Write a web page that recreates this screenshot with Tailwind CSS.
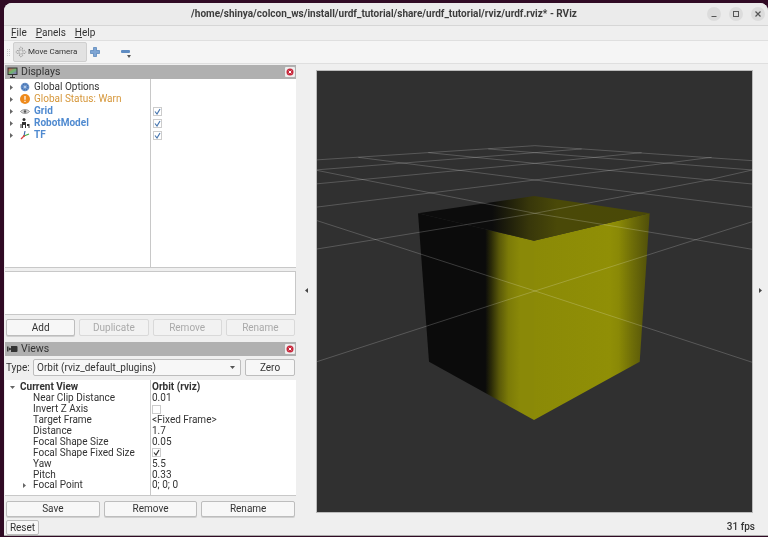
<!DOCTYPE html>
<html>
  <head>
    <meta charset="utf-8" />
    <title>RViz</title>
    <script src="https://cdn.jsdelivr.net/npm/@tailwindcss/browser@4"></script>
  </head>
  <body>
    <div class="h-[537px] w-[768px] overflow-hidden bg-[#300a24] pl-[4px] pt-[3px] text-[10px] leading-[10px] text-[#333] font-['Roboto',sans-serif] blur-[0.35px]">
      <div class="relative flex h-[533px] flex-col overflow-hidden rounded-t-[8px] bg-[#efefef]">
        <!-- title bar -->
        <div class="relative flex h-[23px] shrink-0 items-center justify-center border-b border-[#d6d6d6] bg-[#ebebeb] font-bold text-[#3d3d3d]">
          <span class="mr-[4px]">/home/shinya/colcon_ws/install/urdf_tutorial/share/urdf_tutorial/rviz/urdf.rviz* - RViz</span>
          <div class="absolute right-[3px] top-[4px] flex gap-[8px]">
            <div class="flex size-[14px] items-center justify-center rounded-full bg-[#dcdcdc]">
              <svg width="8" height="8" viewBox="0 0 8 8"><path d="M1.500 6.500h5" stroke="#555" stroke-width="1"/></svg>
            </div>
            <div class="flex size-[14px] items-center justify-center rounded-full bg-[#dcdcdc]">
              <svg width="8" height="8" viewBox="0 0 8 8"><rect x="1.500" y="1.500" width="5" height="5" fill="none" stroke="#555" stroke-width="1"/></svg>
            </div>
            <div class="flex size-[14px] items-center justify-center rounded-full bg-[#dcdcdc]">
              <svg width="8" height="8" viewBox="0 0 8 8"><path d="M1.500 1.500l5 5M6.500 1.500l-5 5" stroke="#555" stroke-width="1.200"/></svg>
            </div>
          </div>
        </div>
        <!-- menu -->
        <div class="flex h-[14px] shrink-0 items-center gap-[9px] pl-[7px] text-[10px]">
          <span><u>F</u>ile</span>
          <span><u>P</u>anels</span>
          <span><u>H</u>elp</span>
        </div>
        <!-- toolbar -->
        <div class="flex h-[24px] shrink-0 items-center border-y border-[#dfdfdf] bg-[#f5f5f5] pl-[3px]">
          <div class="grid grid-cols-2 gap-[1px]">
            <i class="size-[1px] bg-[#ccc]"></i><i class="size-[1px] bg-[#ccc]"></i>
            <i class="size-[1px] bg-[#ccc]"></i><i class="size-[1px] bg-[#ccc]"></i>
            <i class="size-[1px] bg-[#ccc]"></i><i class="size-[1px] bg-[#ccc]"></i>
            <i class="size-[1px] bg-[#ccc]"></i><i class="size-[1px] bg-[#ccc]"></i>
          </div>
          <div class="ml-[3px] flex h-[20px] w-[74px] items-center gap-[1px] rounded-[2px] border border-[#cfcfcf] bg-[#e2e2e2] pl-[1px] text-[8px]">
            <svg width="12" height="12" viewBox="0 0 12 12" fill="none" stroke="#888" stroke-width="0.8">
              <path d="M6 .8l2 2H7v2.200h2.200V4l2 2-2 2V7H7v2.200h1l-2 2-2-2h1V7H2.800v1l-2-2 2-2v1H5V2.800H4z" stroke-dasharray="1 .5"/>
            </svg>
            <span>Move Camera</span>
          </div>
          <svg class="ml-[3px]" width="10" height="10" viewBox="0 0 10 10"><path d="M3.500 .5h3v3h3v3h-3v3h-3v-3h-3v-3h3z" fill="#7fa5d3" stroke="#4f7fb8" stroke-width="0.7"/></svg>
          <div class="relative ml-[21px] h-[10px] w-[10px]">
            <div class="mt-[3px] h-[3px] w-[9px] rounded-[1px] bg-[#5f8cc2]"></div>
            <svg class="absolute left-[6px] top-[8px]" width="5" height="3" viewBox="0 0 5 3"><path d="M0 0h4L2 3z" fill="#555"/></svg>
          </div>
        </div>
        <!-- main area -->
        <div class="flex h-[454px] shrink-0">
          <div class="ml-[1px] flex w-[291px] shrink-0 flex-col pt-[1px]">
            <div class="flex h-[14px] shrink-0 items-center bg-[#b0b0b0] pl-[2px] text-[10.5px]">
              <svg width="11" height="11" viewBox="0 0 11 11">
                <defs>
                  <linearGradient id="screen" x1="0" y1="0" x2="1" y2="1">
                    <stop offset="0" stop-color="#d85a5a"/>
                    <stop offset="0.5" stop-color="#6cb86c"/>
                    <stop offset="1" stop-color="#8a6fc8"/>
                  </linearGradient>
                </defs>
                <rect x="0.500" y="0.500" width="10" height="7.500" fill="#333"/>
                <rect x="1.500" y="1.500" width="8" height="5.500" fill="url(#screen)"/>
                <path d="M3 10h5v1H3zM5 8h1v2H5z" fill="#333"/>
              </svg>
              <span class="ml-[3px]">Displays</span>
              <div class="ml-auto mr-[1px] flex size-[10px] items-center justify-center rounded-[1px] bg-[#eee]">
                <svg width="8" height="8" viewBox="0 0 8 8"><circle cx="4" cy="4" r="3.500" fill="#c8283c"/><path d="M2.700 2.700l2.600 2.600M5.300 2.700L2.700 5.300" stroke="#fff" stroke-width="1"/></svg>
              </div>
            </div>
            <!-- displays tree -->
            <div class="flex h-[189px] shrink-0 flex-col border-b border-[#c8c8c8] bg-white bg-[linear-gradient(#c8c8c8,#c8c8c8)] bg-[length:1px_100%] bg-[position:145px_0] bg-no-repeat pt-[2px]">
              <div class="flex h-[12px] items-center">
                <svg class="ml-[5px]" width="3" height="5" viewBox="0 0 3 5"><path d="M0 0l3 2.500L0 5z" fill="#666"/></svg>
                <svg class="ml-[7px]" width="10" height="10" viewBox="0 0 11 11"><circle cx="5.500" cy="5.500" r="4.800" fill="#6e96cc"/><circle cx="5.500" cy="5.500" r="3.200" fill="none" stroke="#3f6dad" stroke-width="1.200" stroke-dasharray="1.500 1"/><circle cx="5.500" cy="5.500" r="1.200" fill="#c4d6ee"/></svg>
                <span class="ml-[4px]">Global Options</span>
              </div>
              <div class="flex h-[12px] items-center">
                <svg class="ml-[5px]" width="3" height="5" viewBox="0 0 3 5"><path d="M0 0l3 2.500L0 5z" fill="#666"/></svg>
                <svg class="ml-[7px]" width="10" height="10" viewBox="0 0 10 10"><circle cx="5" cy="5" r="5" fill="#ee8a1c"/><path d="M4.400 2h1.200v3.800H4.400zM4.400 6.800h1.200V8H4.400z" fill="#fff"/></svg>
                <span class="ml-[4px] text-[#d6973a]">Global Status: Warn</span>
              </div>
              <div class="flex h-[12px] items-center">
                <svg class="ml-[5px]" width="3" height="5" viewBox="0 0 3 5"><path d="M0 0l3 2.500L0 5z" fill="#666"/></svg>
                <svg class="ml-[7px]" width="10" height="7" viewBox="0 0 10 7"><path d="M.5 3.500C2.500 1 7.500 1 9.500 3.500 7.500 6 2.500 6 .5 3.500z" fill="#ddd" stroke="#777" stroke-width="0.800"/><circle cx="5" cy="3.500" r="1.300" fill="#555"/></svg>
                <span class="ml-[4px] font-bold text-[#4f8ad0]">Grid</span>
                <span class="ml-auto mr-[134px] flex size-[9px] items-center justify-center border border-[#ccc] bg-white">
                  <svg width="7" height="7" viewBox="0 0 7 7"><path d="M1 3.500l2 2.500L6 1" fill="none" stroke="#4a78b0" stroke-width="1.200"/></svg>
                </span>
              </div>
              <div class="flex h-[12px] items-center">
                <svg class="ml-[5px]" width="3" height="5" viewBox="0 0 3 5"><path d="M0 0l3 2.500L0 5z" fill="#666"/></svg>
                <svg class="ml-[7px]" width="10" height="10" viewBox="0 0 10 10"><circle cx="4" cy="1.500" r="1.500" fill="#333"/><path d="M2 4h4v6H5V7H3v3H2zM.5 6h1v4h-1zM7 6h2.500v4H8.500V8H7z" fill="#333"/></svg>
                <span class="ml-[4px] font-bold text-[#4f8ad0]">RobotModel</span>
                <span class="ml-auto mr-[134px] flex size-[9px] items-center justify-center border border-[#ccc] bg-white">
                  <svg width="7" height="7" viewBox="0 0 7 7"><path d="M1 3.500l2 2.500L6 1" fill="none" stroke="#4a78b0" stroke-width="1.200"/></svg>
                </span>
              </div>
              <div class="flex h-[12px] items-center">
                <svg class="ml-[5px]" width="3" height="5" viewBox="0 0 3 5"><path d="M0 0l3 2.500L0 5z" fill="#666"/></svg>
                <svg class="ml-[7px]" width="10" height="10" viewBox="0 0 10 10"><path d="M4 6L1 9" stroke="#d84040" stroke-width="1.200"/><path d="M4 6L5 1" stroke="#3f6dad" stroke-width="1.200"/><path d="M4 6L9 4" stroke="#45b045" stroke-width="1.200"/><circle cx="4" cy="6" r="0.900" fill="#d84040"/></svg>
                <span class="ml-[4px] font-bold text-[#4f8ad0]">TF</span>
                <span class="ml-auto mr-[134px] flex size-[9px] items-center justify-center border border-[#ccc] bg-white">
                  <svg width="7" height="7" viewBox="0 0 7 7"><path d="M1 3.500l2 2.500L6 1" fill="none" stroke="#4a78b0" stroke-width="1.200"/></svg>
                </span>
              </div>
            </div>
            <!-- description -->
            <div class="mt-[3px] h-[44px] shrink-0 border border-[#c8c8c8] border-l-0 bg-white"></div>
            <div class="ml-[1px] mr-[1px] mt-[4px] grid h-[17px] shrink-0 grid-cols-4 gap-[4px]">
              <div class="flex items-center justify-center rounded-[2px] border border-[#bdbdbd] bg-[#f7f7f7] shadow-[0_1px_0_#d0d0d0]">Add</div>
              <div class="flex items-center justify-center rounded-[2px] border border-[#d9d9d9] bg-[#f2f2f2] text-[#aaa]">Duplicate</div>
              <div class="flex items-center justify-center rounded-[2px] border border-[#d9d9d9] bg-[#f2f2f2] text-[#aaa]">Remove</div>
              <div class="flex items-center justify-center rounded-[2px] border border-[#d9d9d9] bg-[#f2f2f2] text-[#aaa]">Rename</div>
            </div>
            <!-- views -->
            <div class="mt-[6px] flex h-[14px] shrink-0 items-center bg-[#b0b0b0] pl-[2px] text-[10.5px]">
              <svg width="11" height="8" viewBox="0 0 11 8"><path d="M0 1.500h1.500v5H0zM2 2.500l2 1v1l-2 1zM4 1h5.500a1 1 0 0 1 1 1v4a1 1 0 0 1-1 1H4z" fill="#333"/></svg>
              <span class="ml-[3px]">Views</span>
              <div class="ml-auto mr-[1px] flex size-[10px] items-center justify-center rounded-[1px] bg-[#eee]">
                <svg width="8" height="8" viewBox="0 0 8 8"><circle cx="4" cy="4" r="3.500" fill="#c8283c"/><path d="M2.700 2.700l2.600 2.600M5.300 2.700L2.700 5.300" stroke="#fff" stroke-width="1"/></svg>
              </div>
            </div>
            <div class="ml-[1px] mr-[1px] mt-[3px] flex h-[17px] shrink-0 items-center">
              <span class="w-[27px]">Type:</span>
              <div class="flex h-full w-[208px] items-center rounded-[2px] border border-[#bdbdbd] bg-[#f7f7f7] pl-[3px]">
                Orbit (rviz_default_plugins)
                <svg class="ml-auto mr-[5px]" width="5" height="3" viewBox="0 0 5 3"><path d="M0 0h5L2.500 3z" fill="#555"/></svg>
              </div>
              <div class="ml-[4px] flex h-full flex-1 items-center justify-center rounded-[2px] border border-[#bdbdbd] bg-[#f7f7f7]">Zero</div>
            </div>
            <!-- views tree -->
            <div class="mt-[4px] flex h-[116px] shrink-0 flex-col border-b border-[#c8c8c8] bg-white bg-[linear-gradient(#c8c8c8,#c8c8c8)] bg-[length:1px_100%] bg-[position:145px_0] bg-no-repeat pt-[2px]">
              <div class="flex h-[10.9px] items-center font-bold">
                <svg class="ml-[5px]" width="5" height="3" viewBox="0 0 5 3"><path d="M0 0h5L2.500 3z" fill="#666"/></svg>
                <span class="ml-[5px] w-[132px]">Current View</span>
                <span>Orbit (rviz)</span>
              </div>
              <div class="flex h-[10.9px] items-center"><span class="ml-[28px] w-[119px]">Near Clip Distance</span><span>0.01</span></div>
              <div class="flex h-[10.9px] items-center">
                <span class="ml-[28px] w-[119px]">Invert Z Axis</span>
                <span class="size-[9px] border border-[#ccc] bg-white"></span>
              </div>
              <div class="flex h-[10.9px] items-center"><span class="ml-[28px] w-[119px]">Target Frame</span><span>&lt;Fixed Frame&gt;</span></div>
              <div class="flex h-[10.9px] items-center"><span class="ml-[28px] w-[119px]">Distance</span><span>1.7</span></div>
              <div class="flex h-[10.9px] items-center"><span class="ml-[28px] w-[119px]">Focal Shape Size</span><span>0.05</span></div>
              <div class="flex h-[10.9px] items-center">
                <span class="ml-[28px] w-[119px]">Focal Shape Fixed Size</span>
                <span class="flex size-[9px] items-center justify-center border border-[#ccc] bg-white">
                  <svg width="7" height="7" viewBox="0 0 7 7"><path d="M1 3.500l2 2.500L6 1" fill="none" stroke="#333" stroke-width="1.200"/></svg>
                </span>
              </div>
              <div class="flex h-[10.9px] items-center"><span class="ml-[28px] w-[119px]">Yaw</span><span>5.5</span></div>
              <div class="flex h-[10.9px] items-center"><span class="ml-[28px] w-[119px]">Pitch</span><span>0.33</span></div>
              <div class="flex h-[10.9px] items-center">
                <svg class="ml-[18px]" width="3" height="5" viewBox="0 0 3 5"><path d="M0 0l3 2.500L0 5z" fill="#666"/></svg>
                <span class="ml-[7px] w-[119px]">Focal Point</span><span>0; 0; 0</span>
              </div>
            </div>
            <div class="ml-[1px] mr-[1px] mt-[5px] grid h-[16px] shrink-0 grid-cols-3 gap-[4px]">
              <div class="flex items-center justify-center rounded-[2px] border border-[#bdbdbd] bg-[#f7f7f7] shadow-[0_1px_0_#d0d0d0]">Save</div>
              <div class="flex items-center justify-center rounded-[2px] border border-[#bdbdbd] bg-[#f7f7f7] shadow-[0_1px_0_#d0d0d0]">Remove</div>
              <div class="flex items-center justify-center rounded-[2px] border border-[#bdbdbd] bg-[#f7f7f7] shadow-[0_1px_0_#d0d0d0]">Rename</div>
            </div>
          </div>
          <!-- collapse arrow left -->
          <div class="flex w-[20px] shrink-0 items-center justify-center pb-[2px]">
            <svg width="3" height="5" viewBox="0 0 3 5"><path d="M3 0L0 2.500 3 5z" fill="#444"/></svg>
          </div>
          <!-- 3d view -->
          <div class="mt-[6px] h-[443px] w-[437px] shrink-0 border border-[#bbb] bg-[#303030]">
            <svg width="435" height="441" viewBox="318 71 435 441">
              <defs>
                <linearGradient id="leftFace" gradientUnits="userSpaceOnUse" x1="419" y1="0" x2="535" y2="0">
                  <stop offset="0" stop-color="#0b0b0b"/>
                  <stop offset="0.58" stop-color="#0b0b0b"/>
                  <stop offset="0.63" stop-color="#2a2a08"/>
                  <stop offset="0.70" stop-color="#5a5909"/>
                  <stop offset="0.78" stop-color="#7c7b08"/>
                  <stop offset="0.88" stop-color="#8a8908"/>
                  <stop offset="1" stop-color="#8a8908"/>
                </linearGradient>
                <linearGradient id="rightFace" gradientUnits="userSpaceOnUse" x1="535" y1="0" x2="651" y2="0">
                  <stop offset="0" stop-color="#8b8a07"/>
                  <stop offset="0.65" stop-color="#908f06"/>
                  <stop offset="0.73" stop-color="#8a8906"/>
                  <stop offset="0.85" stop-color="#6e6d08"/>
                  <stop offset="1" stop-color="#4f4e0a"/>
                </linearGradient>
                <linearGradient id="topFace" gradientUnits="userSpaceOnUse" x1="419" y1="0" x2="651" y2="0">
                  <stop offset="0" stop-color="#0c0c0c"/>
                  <stop offset="0.32" stop-color="#0c0c0c"/>
                  <stop offset="0.48" stop-color="#38370a"/>
                  <stop offset="0.60" stop-color="#4a4908"/>
                  <stop offset="1" stop-color="#4a4907"/>
                </linearGradient>
              </defs>
              <polygon points="419,213.300 535,240.700 535,420 430,361.700" fill="url(#leftFace)"/>
              <polygon points="535,240.700 650.700,213.300 640.700,361.700 535,420" fill="url(#rightFace)"/>
              <polygon points="535,196 650.700,213.300 535,240.700 419,213.300" fill="url(#topFace)"/>
              <g transform="translate(316 120) scale(0.3333)" fill="none" stroke="#fff" stroke-opacity="0.2" stroke-width="3">
                <path d="M0 120L660 77L1312 122"/>
                <path d="M0 150L660 98L800 87"/>
                <path d="M0 192L660 130L980 98"/>
                <path d="M0 262L660 180L1190 112"/>
                <path d="M0 388L185 358L660 280L1180 180L1312 150"/>
                <path d="M0 727L660 513L1312 305"/>
                <path d="M1312 150L660 98L520 87"/>
                <path d="M1312 192L660 130L340 98"/>
                <path d="M1312 262L660 180L130 112"/>
                <path d="M1312 388L1135 358L660 280L150 180L0 150"/>
                <path d="M1312 727L660 513L0 300"/>
              </g>
            </svg>
          </div>
          <!-- collapse arrow right -->
          <div class="flex flex-1 items-center justify-center pb-[2px]">
            <svg width="3" height="5" viewBox="0 0 3 5"><path d="M0 0l3 2.500L0 5z" fill="#444"/></svg>
          </div>
        </div>
        <!-- status bar -->
        <div class="flex flex-1 items-start border-b border-[#aaa] pl-[2px] pt-[2px]">
          <div class="flex h-[15px] w-[33px] items-center justify-center rounded-[2px] border border-[#bdbdbd] bg-[#f7f7f7]">Reset</div>
          <span class="ml-auto mr-[13px] mt-[2px] font-medium">31 fps</span>
        </div>
      </div>
    </div>
  </body>
</html>
